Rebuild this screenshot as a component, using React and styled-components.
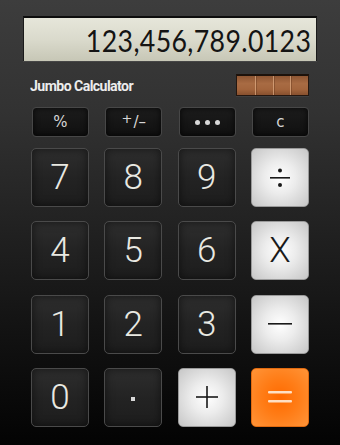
import React from "react";
import styled, { createGlobalStyle, css } from "styled-components";

const Global = createGlobalStyle`
  html, body { margin: 0; padding: 0; }
  body {
    width: 340px;
    height: 445px;
    overflow: hidden;
    background: linear-gradient(180deg, #3d3d3d 0%, #323232 25%, #222 50%, #101010 78%, #030303 100%);
    font-family: Roboto, "Liberation Sans", sans-serif;
  }
`;

const Page = styled.div`
  width: 340px;
  height: 445px;
  display: flex;
  flex-direction: column;
  padding-top: 16px;
  box-sizing: border-box;
`;

const Display = styled.div`
  margin-left: 23px;
  width: 294px;
  height: 45px;
  box-sizing: border-box;
  border-top: 2px solid #0d0d0d;
  border-left: 1px solid #1a1a1a;
  border-right: 1px solid #1a1a1a;
  background: linear-gradient(180deg, #e6e6da 0%, #dadacc 50%, #c7c7b6 100%);
  box-shadow: 0 1px 0 rgba(255,255,255,0.08);
  display: flex;
  align-items: center;
  justify-content: flex-end;
  padding-right: 5px;
  padding-top: 1px;
`;

const Readout = styled.span`
  display: inline-block;
  font-family: Lato, "DejaVu Sans", sans-serif;
  font-weight: 400;
  font-size: 30px;
  color: #141414;
  letter-spacing: 0.4px;
  transform: scaleX(0.89);
  transform-origin: right center;
  white-space: nowrap;
`;

const Header = styled.div`
  margin-top: 12px;
  height: 23px;
  display: flex;
  align-items: center;
  justify-content: space-between;
  padding-left: 30px;
  padding-right: 31px;
`;

const Title = styled.div`
  font-family: Roboto, "Liberation Sans", sans-serif;
  font-weight: 700;
  font-size: 15px;
  letter-spacing: -0.6px;
  color: #ececec;
  transform: scaleX(0.94);
  transform-origin: left center;
  padding-top: 2px;
`;

const Copper = styled.div`
  width: 73px;
  height: 22px;
  box-sizing: border-box;
  border: 1px solid #241710;
  border-top: 2px solid #1d120b;
  background: linear-gradient(180deg, #8e5633 0%, #a86b43 40%, #a3653d 70%, #87502e 100%);
  display: grid;
  grid-template-columns: repeat(4, 1fr);
  box-shadow: 0 1px 0 rgba(255,255,255,0.06);
`;

const Cell = styled.div`
  border-left: ${(p) => (p.first ? "none" : "1px solid rgba(235,185,145,0.6)")};
  box-shadow: ${(p) => (p.first ? "none" : "inset 1px 0 0 rgba(90,45,20,0.35)")};
`;

const FnRow = styled.div`
  margin-top: 11px;
  padding-left: 32px;
  display: grid;
  grid-template-columns: repeat(4, 57px);
  column-gap: 16.3px;
`;

const FnKey = styled.div`
  height: 30px;
  box-sizing: border-box;
  border-radius: 4px;
  border: 1px solid #474747;
  background: linear-gradient(180deg, #1c1c1c 0%, #101010 100%);
  box-shadow: inset 0 0 6px rgba(0,0,0,0.8);
  display: flex;
  align-items: center;
  justify-content: center;
  color: #d6d6d6;
  font-family: "DejaVu Sans", Roboto, sans-serif;
  font-size: 15px;
`;

const Sup = styled.span`
  font-size: 13px;
  position: relative;
  top: -4px;
  margin-right: 1px;
`;

const Dots = styled.div`
  display: flex;
  gap: 5px;
`;

const Dot = styled.span`
  width: 5px;
  height: 5px;
  border-radius: 50%;
  background: #d8d8d8;
`;

const Keys = styled.div`
  margin-top: 11px;
  padding-left: 31px;
  display: grid;
  grid-template-columns: repeat(4, 58px);
  grid-auto-rows: 59px;
  column-gap: 15.3px;
  row-gap: 14.3px;
`;

const variants = {
  digit: css`
    border: 1px solid #4a4a4a;
    background: linear-gradient(180deg, #2e2e2e 0%, #232323 50%, #1d1d1d 100%);
    box-shadow: inset 0 0 10px rgba(0,0,0,0.55);
    color: #e9e9e2;
  `,
  light: css`
    border: 1px solid #9a9a9a;
    background: radial-gradient(ellipse at 50% 50%, #ffffff 0%, #ececec 40%, #c6c6c6 100%);
    color: #1a1a1a;
  `,
  orange: css`
    border: 1px solid #e06a10;
    background: radial-gradient(ellipse at 50% 50%, #ff6a00 0%, #ff7c16 45%, #ff9438 100%);
    color: #ffe3c8;
  `,
};

const Key = styled.div`
  box-sizing: border-box;
  border-radius: 5px;
  display: flex;
  align-items: center;
  justify-content: center;
  font-family: Roboto, "Liberation Sans", sans-serif;
  font-weight: 300;
  font-size: 35px;
  ${(p) => variants[p.kind || "digit"]}
`;

const Point = styled.span`
  width: 4px;
  height: 4px;
  background: #d8d8d8;
  margin-top: 4px;
`;

const Divide = () => (
  <svg width="26" height="26" viewBox="0 0 26 26">
    <circle cx="13" cy="5.5" r="2" fill="#1a1a1a" />
    <rect x="3" y="12" width="20" height="1.6" fill="#1a1a1a" />
    <circle cx="13" cy="20" r="2" fill="#1a1a1a" />
  </svg>
);

const Minus = () => (
  <svg width="24" height="4" viewBox="0 0 24 4">
    <rect x="0" y="1" width="24" height="1.6" fill="#1a1a1a" />
  </svg>
);

const Plus = () => (
  <svg width="22" height="22" viewBox="0 0 22 22">
    <rect x="0" y="10.2" width="22" height="1.6" fill="#1a1a1a" />
    <rect x="10.2" y="0" width="1.6" height="22" fill="#1a1a1a" />
  </svg>
);

const Equals = () => (
  <svg width="24" height="14" viewBox="0 0 24 14">
    <rect x="0" y="1" width="24" height="2.6" rx="1" fill="#ffe0c4" />
    <rect x="0" y="10" width="24" height="2.6" rx="1" fill="#ffe0c4" />
  </svg>
);

export default function App() {
  return (
    <>
      <Global />
      <Page>
        <Display>
          <Readout>123,456,789.0123</Readout>
        </Display>
        <Header>
          <Title>Jumbo Calculator</Title>
          <Copper>
            <Cell first />
            <Cell />
            <Cell />
            <Cell />
          </Copper>
        </Header>
        <FnRow>
          <FnKey>%</FnKey>
          <FnKey>
            <Sup>+</Sup>/–
          </FnKey>
          <FnKey>
            <Dots>
              <Dot />
              <Dot />
              <Dot />
            </Dots>
          </FnKey>
          <FnKey>c</FnKey>
        </FnRow>
        <Keys>
          <Key>7</Key>
          <Key>8</Key>
          <Key>9</Key>
          <Key kind="light"><Divide /></Key>
          <Key>4</Key>
          <Key>5</Key>
          <Key>6</Key>
          <Key kind="light">X</Key>
          <Key>1</Key>
          <Key>2</Key>
          <Key>3</Key>
          <Key kind="light"><Minus /></Key>
          <Key>0</Key>
          <Key><Point /></Key>
          <Key kind="light"><Plus /></Key>
          <Key kind="orange"><Equals /></Key>
        </Keys>
      </Page>
    </>
  );
}
